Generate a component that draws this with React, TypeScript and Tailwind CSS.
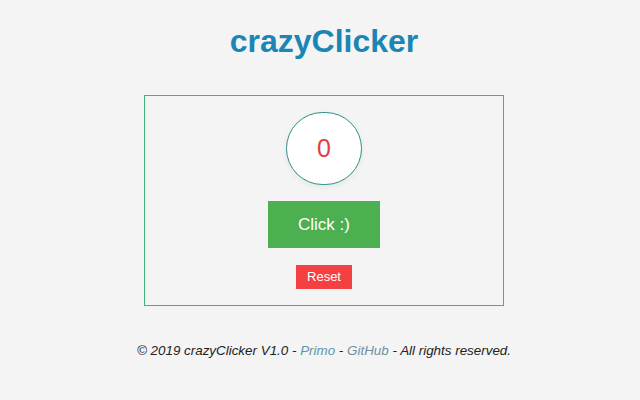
import React, { useState } from 'react';

export default function App() {
  const [count, setCount] = useState(0);

  return (
    <div className="w-[640px] h-[400px] bg-[#f4f4f4] flex flex-col items-center pl-[8px] font-['Liberation_Sans',Arial,sans-serif]">
      {/* Title */}
      <h1 className="mt-[23px] text-[32px] leading-[36px] font-bold text-[#1b86b5]">crazyClicker</h1>

      {/* Counter card */}
      <div className="mt-[36px] w-[360px] h-[211px] border border-[#3fb37f] flex flex-col items-center pt-[16px]">
        <div className="w-[76px] h-[73px] rounded-full border border-[#2b9185] bg-white flex items-center justify-center shadow-[0_2px_6px_rgba(0,0,0,0.06)]">
          <span className="text-[25px] text-[#e53d3d] leading-none">{count}</span>
        </div>
        <button
          onClick={() => setCount(count + 1)}
          className="mt-[16px] w-[112px] h-[47px] bg-[#4caf50] text-white text-[17px] flex items-center justify-center"
        >
          Click :)
        </button>
        <button
          onClick={() => setCount(0)}
          className="mt-[17px] w-[56px] h-[24px] bg-[#f44040] text-white text-[13px] flex items-center justify-center"
        >
          Reset
        </button>
      </div>

      {/* Footer */}
      <p className="mt-[37px] text-[13.4px] leading-[15px] italic text-[#222]">
        © 2019 crazyClicker V1.0 - <span className="text-[#5a95ad]">Primo</span> -{' '}
        <span className="text-[#6f8fa0]">GitHub</span> - All rights reserved.
      </p>
    </div>
  );
}
